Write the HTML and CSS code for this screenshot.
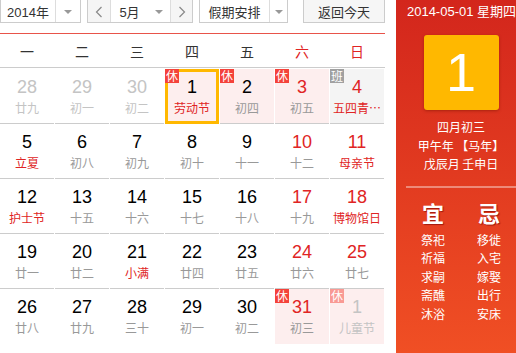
FILE: index.html
```html
<!DOCTYPE html>
<html lang="zh-CN">
<head>
  <meta charset="UTF-8">
  <title>万年历</title>
  <link rel="stylesheet" href="styles.css">
</head>
<body>
  <div class="app">
    <div class="main">
      <div class="toolbar">
        <div class="select year">
          <span class="select-text">2014年</span>
          <span class="select-arrow"><i class="caret"></i></span>
        </div>
        <div class="month-group">
          <span class="nav-btn">
            <svg width="8" height="12" viewBox="0 0 8 12"><polyline points="6.5,1 1.5,6 6.5,11" fill="none" stroke="#888" stroke-width="1.2"/></svg>
          </span>
          <div class="select month">
            <span class="select-text">5月</span>
            <span class="select-arrow"><i class="caret"></i></span>
          </div>
          <span class="nav-btn last">
            <svg width="8" height="12" viewBox="0 0 8 12"><polyline points="1.5,1 6.5,6 1.5,11" fill="none" stroke="#888" stroke-width="1.2"/></svg>
          </span>
        </div>
        <div class="select holiday">
          <span class="select-text">假期安排</span>
          <span class="select-arrow"><i class="caret"></i></span>
        </div>
        <div class="today-btn">返回今天</div>
      </div>

      <div class="weekdays">
        <span>一</span><span>二</span><span>三</span><span>四</span><span>五</span>
        <span class="wkend">六</span><span class="wkend">日</span>
      </div>

      <div class="grid">
        <div class="cell other"><b>28</b><em>廿九</em></div>
        <div class="cell other"><b>29</b><em>初一</em></div>
        <div class="cell other"><b>30</b><em>初二</em></div>
        <div class="cell rest selected"><i class="badge">休</i><b>1</b><em class="fest">劳动节</em></div>
        <div class="cell rest"><i class="badge">休</i><b>2</b><em>初四</em></div>
        <div class="cell rest wkend"><i class="badge">休</i><b>3</b><em>初五</em></div>
        <div class="cell work wkend"><i class="badge gray">班</i><b>4</b><em class="fest">五四青…</em></div>

        <div class="cell row-top"><b>5</b><em class="fest">立夏</em></div>
        <div class="cell"><b>6</b><em>初八</em></div>
        <div class="cell"><b>7</b><em>初九</em></div>
        <div class="cell"><b>8</b><em>初十</em></div>
        <div class="cell"><b>9</b><em>十一</em></div>
        <div class="cell wkend"><b>10</b><em>十二</em></div>
        <div class="cell wkend"><b>11</b><em class="fest">母亲节</em></div>

        <div class="cell"><b>12</b><em class="fest">护士节</em></div>
        <div class="cell"><b>13</b><em>十五</em></div>
        <div class="cell"><b>14</b><em>十六</em></div>
        <div class="cell"><b>15</b><em>十七</em></div>
        <div class="cell"><b>16</b><em>十八</em></div>
        <div class="cell wkend"><b>17</b><em>十九</em></div>
        <div class="cell wkend"><b>18</b><em class="fest">博物馆日</em></div>

        <div class="cell"><b>19</b><em>廿一</em></div>
        <div class="cell"><b>20</b><em>廿二</em></div>
        <div class="cell"><b>21</b><em class="fest">小满</em></div>
        <div class="cell"><b>22</b><em>廿四</em></div>
        <div class="cell"><b>23</b><em>廿五</em></div>
        <div class="cell wkend"><b>24</b><em>廿六</em></div>
        <div class="cell wkend"><b>25</b><em>廿七</em></div>

        <div class="cell last-row"><b>26</b><em>廿八</em></div>
        <div class="cell last-row"><b>27</b><em>廿九</em></div>
        <div class="cell last-row"><b>28</b><em>三十</em></div>
        <div class="cell last-row"><b>29</b><em>初一</em></div>
        <div class="cell last-row"><b>30</b><em>初二</em></div>
        <div class="cell last-row rest wkend"><i class="badge">休</i><b>31</b><em>初三</em></div>
        <div class="cell last-row rest other"><i class="badge light">休</i><b>1</b><em>儿童节</em></div>
      </div>
    </div>

    <div class="side">
      <div class="side-date">2014-05-01 星期四</div>
      <div class="big-day">1</div>
      <div class="lunar">
        <p>四月初三</p>
        <p>甲午年 【马年】</p>
        <p>戊辰月 壬申日</p>
      </div>
      <div class="divider"></div>
      <div class="yiji">
        <div class="yiji-col">
          <h3>宜</h3>
          <p>祭祀</p><p>祈福</p><p>求嗣</p><p>斋醮</p><p>沐浴</p>
        </div>
        <div class="yiji-col">
          <h3>忌</h3>
          <p>移徙</p><p>入宅</p><p>嫁娶</p><p>出行</p><p>安床</p>
        </div>
      </div>
    </div>
  </div>
</body>
</html>
```

FILE: styles.css
```css
* {
  box-sizing: border-box;
}
html, body {
  margin: 0;
  padding: 0;
  overflow: hidden;
  background: #fff;
}
body {
  font-family: "Liberation Sans", "Noto Sans CJK SC", Arial, sans-serif;
  color: #333;
}
.app {
  display: flex;
  width: 526px;
  height: 353px;
}
.main {
  width: 385px;
  margin-right: 11px;
}

/* toolbar */
.toolbar {
  display: flex;
  height: 25px;
  margin-top: -2px;
  font-family: "Noto Sans CJK SC", sans-serif;
  font-size: 13px;
  color: #333;
}
.select {
  display: flex;
  border: 1px solid #ccc;
  background: #fff;
  height: 25px;
}
.select-text {
  display: flex;
  align-items: center;
  justify-content: center;
  padding-top: 2px;
}
.select-arrow {
  display: flex;
  align-items: center;
  justify-content: center;
  border-left: 1px solid #ddd;
  padding-top: 2px;
}
.caret {
  width: 0;
  height: 0;
  border-left: 4px solid transparent;
  border-right: 4px solid transparent;
  border-top: 4px solid #999;
}
.year {
  width: 81px;
  margin-right: 6px;
}
.year .select-text {
  width: 54px;
  font-family: "Liberation Sans", "Noto Sans CJK SC", sans-serif;
}
.year .select-arrow {
  flex: 1;
}
.month-group {
  display: flex;
  width: 106px;
  height: 25px;
  border: 1px solid #ccc;
  margin-right: 6px;
}
.nav-btn {
  display: flex;
  align-items: center;
  justify-content: center;
  width: 22px;
  background: #f5f5f5;
  padding-top: 2px;
}
.nav-btn.last {
  flex: 1;
}
.month {
  border-top: 0;
  border-bottom: 0;
  width: 61px;
  height: 23px;
  border-color: #ddd;
}
.month .select-text {
  width: 37px;
  font-family: "Liberation Sans", "Noto Sans CJK SC", sans-serif;
}
.month .select-arrow {
  flex: 1;
  border-left: 0;
}
.holiday {
  width: 89px;
  margin-right: 15px;
}
.holiday .select-text {
  width: 69px;
}
.holiday .select-arrow {
  flex: 1;
}
.today-btn {
  width: 82px;
  height: 25px;
  border: 1px solid #ccc;
  background: #f6f6f6;
  display: flex;
  align-items: center;
  justify-content: center;
  padding-top: 2px;
}

/* weekday header */
.weekdays {
  display: grid;
  grid-template-columns: repeat(7, 54px);
  column-gap: 1px;
  margin-top: 10px;
  height: 35px;
  border-top: 1px solid #e8534a;
  border-bottom: 1px solid #ccc;
  font-family: "Noto Sans CJK SC", sans-serif;
  font-size: 14px;
  color: #333;
}
.weekdays span {
  display: flex;
  align-items: center;
  justify-content: center;
}
.weekdays .wkend {
  color: #e02424;
}

/* days */
.grid {
  display: grid;
  grid-template-columns: repeat(7, 54px);
  grid-auto-rows: 55px;
  column-gap: 1px;
  padding-top: 1px;
}
.cell {
  position: relative;
  display: flex;
  flex-direction: column;
  align-items: center;
  border-bottom: 1px solid #ccc;
  padding-top: 8px;
}
.cell.last-row {
  border-bottom: 0;
}
.cell b {
  font-weight: normal;
  font-size: 18px;
  line-height: 20px;
  color: #000;
}
.cell em {
  font-style: normal;
  font-family: "Noto Sans CJK SC", sans-serif;
  font-size: 12px;
  line-height: 16px;
  margin-top: 3px;
  color: #999;
  white-space: nowrap;
}
.cell em.fest {
  color: #e02424;
}
.cell.wkend b {
  color: #e02424;
}
.cell.other b,
.cell.other em {
  color: #c4c4c4;
}
.rest {
  background: #fdeeee;
}
.work {
  background: #f4f4f4;
}
.selected {
  border: 3px solid #ffb800;
  padding-top: 5px;
}
.badge {
  position: absolute;
  left: 0;
  top: 0;
  width: 14px;
  height: 14px;
  background: #f4423a;
  color: #fff;
  font-style: normal;
  font-family: "Noto Sans CJK SC", sans-serif;
  font-size: 12px;
  line-height: 14px;
  text-align: center;
}
.selected .badge {
  left: -3px;
  top: -3px;
}
.badge.gray {
  background: #a0a0a0;
}
.badge.light {
  background: #f99a94;
}

/* right panel */
.side {
  width: 130px;
  height: 353px;
  background: linear-gradient(#d3261c, #f04f24);
  color: #fff;
  font-family: "Noto Sans CJK SC", sans-serif;
  display: flex;
  flex-direction: column;
  align-items: center;
  padding-top: 3px;
}
.side-date {
  font-family: "Liberation Sans", "Noto Sans CJK SC", sans-serif;
  font-size: 13px;
  line-height: 18px;
  white-space: nowrap;
  margin-left: 1px;
}
.big-day {
  width: 75px;
  height: 75px;
  margin-top: 14px;
  background: #ffb800;
  border-radius: 3px;
  box-shadow: 0 1px 3px rgba(120, 20, 0, 0.5);
  font-family: "Liberation Sans", Arial, sans-serif;
  font-size: 54px;
  line-height: 75px;
  text-align: center;
}
.lunar {
  margin-top: 8px;
  text-align: center;
  font-size: 12px;
  line-height: 18.5px;
}
.lunar p {
  margin: 0;
  white-space: nowrap;
}
.lunar .wide {
  letter-spacing: 1px;
}
.divider {
  align-self: stretch;
  margin: 12px 0 0 10px;
  height: 2px;
  background: rgba(255, 255, 255, 0.4);
}
.yiji {
  display: flex;
  gap: 22px;
  margin-top: 10px;
}
.yiji-col {
  width: 34px;
  text-align: center;
}
.yiji-col h3 {
  margin: 0 0 5px;
  font-size: 22px;
  line-height: 28px;
  font-weight: bold;
  text-shadow: 1px 1px 1px rgba(120, 0, 0, 0.6);
}
.yiji-col p {
  margin: 0;
  font-size: 12px;
  line-height: 18.5px;
}
```
